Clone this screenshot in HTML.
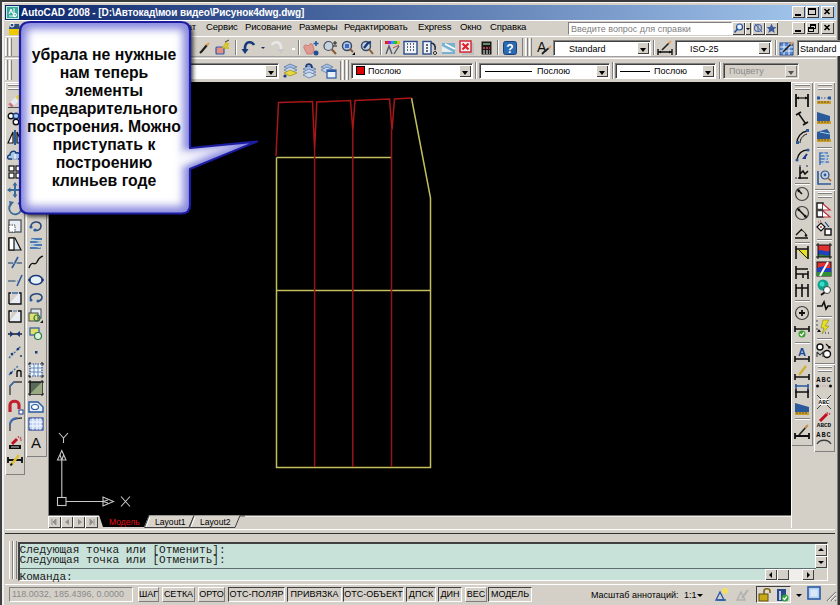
<!DOCTYPE html>
<html><head><meta charset="utf-8">
<style>
*{margin:0;padding:0;box-sizing:border-box}
html,body{width:840px;height:605px;overflow:hidden;background:#d4d0c8;font-family:"Liberation Sans",sans-serif;position:relative}
.a{position:absolute}
svg.a{overflow:visible}
.t{position:absolute;white-space:nowrap;font-size:9px;line-height:10px;color:#000}
.combo{position:absolute;background:#fff;border-top:1px solid #808080;border-left:1px solid #808080;border-bottom:1px solid #fff;border-right:1px solid #fff;box-shadow:inset 1px 1px 0 #404040}
.dd{position:absolute;top:1px;right:1px;width:12px;bottom:1px;background:#d4d0c8;border-top:1px solid #fff;border-left:1px solid #fff;box-shadow:inset -1px -1px 0 #404040}
.dd:after{content:"";position:absolute;left:2px;top:5px;border-left:3.5px solid transparent;border-right:3.5px solid transparent;border-top:4px solid #000}
.btn{position:absolute;background:#d4d0c8;border-top:1px solid #fff;border-left:1px solid #fff;box-shadow:inset -1px -1px 0 #404040}
.grip{position:absolute;width:8px;background:linear-gradient(90deg,#fff 0 1px,#e4e2dc 1px 2px,#808080 2px 3px,transparent 3px 4px,#fff 4px 5px,#e4e2dc 5px 6px,#808080 6px 7px,transparent 7px)}
.sep{position:absolute;width:2px;border-left:1px solid #808080;border-right:1px solid #fff}
.hsep{position:absolute;height:2px;border-top:1px solid #808080;border-bottom:1px solid #fff}
.tb{position:absolute;border-top:1px solid #fff;border-left:1px solid #fff;box-shadow:inset -1px -1px 0 #808080}
.sb{position:absolute;height:15px;border:1px solid;border-color:#404040 #fff #fff #404040;font-size:9px;line-height:13px;text-align:center;color:#000}
.sbr{position:absolute;height:15px;border:1px solid;border-color:#fff #808080 #808080 #fff;font-size:9px;line-height:13px;text-align:center;color:#000}
</style></head><body>
<!-- outer frame -->
<div class="a" style="left:0;top:0;width:840px;height:2px;background:#3a3a3a"></div>
<div class="a" style="left:0;top:0;width:2px;height:605px;background:#404040"></div>
<div class="a" style="left:2px;top:2px;width:836px;height:1px;background:#f4f4f4"></div>
<div class="a" style="left:2px;top:2px;width:2px;height:603px;background:#f0f0f0"></div>
<div class="a" style="left:837px;top:2px;width:1px;height:603px;background:#808080"></div>
<div class="a" style="left:838px;top:0;width:2px;height:605px;background:#303030"></div>

<!-- title bar -->
<div class="a" style="left:5px;top:5px;width:831px;height:15px;background:linear-gradient(90deg,#0a246a 0%,#a6caf0 100%)"></div>
<div class="a" style="left:6px;top:6px;width:13px;height:13px;background:#3aa89a;border:1px solid #c0f0e8"></div>
<svg class="a" style="left:6px;top:6px" width="13" height="13"><path d="M3 8 L5 3 L7 8 M4 6h2 M8 2v9 M3 10h7" stroke="#fff" stroke-width="1" fill="none"/><circle cx="9" cy="9" r="1.6" stroke="#fff" fill="none"/></svg>
<div class="t" style="left:21px;top:7px;color:#fff;font-weight:bold;font-size:10px;line-height:11px;letter-spacing:-0.07px">AutoCAD 2008 - [D:\Автокад\мои видео\Рисунок4dwg.dwg]</div>
<div class="btn" style="left:792px;top:6px;width:13px;height:12px"></div>
<div class="a" style="left:795px;top:14px;width:6px;height:2px;background:#000"></div>
<div class="btn" style="left:806px;top:6px;width:13px;height:12px"></div>
<div class="a" style="left:808px;top:8px;width:8px;height:7px;border:1px solid #000;border-top-width:2px"></div>
<div class="btn" style="left:821px;top:6px;width:13px;height:12px"></div>
<svg class="a" style="left:821px;top:6px" width="13" height="12"><path d="M3.5 3 L8.5 8 M8.5 3 L3.5 8" stroke="#000" stroke-width="1.6"/></svg>

<!-- menu bar -->
<div class="a" style="left:5px;top:20px;width:831px;height:1px;background:#fff"></div>
<svg class="a" style="left:8px;top:21px" width="14" height="15"><path d="M1 8 L12 8 L12 14 L1 14Z" fill="#f0c800"/><path d="M2 3 L11 3 L12 8 L1 8Z" fill="#2a4c7a"/><circle cx="4" cy="4" r="2" fill="none" stroke="#fff"/></svg>
<div class="t" style="left:163px;top:22px;font-size:9.6px;letter-spacing:-0.2px">Формат</div>
<div class="t" style="left:206px;top:22px;font-size:9.6px;letter-spacing:-0.2px">Сервис</div>
<div class="t" style="left:245px;top:22px;font-size:9.6px;letter-spacing:-0.2px">Рисование</div>
<div class="t" style="left:299px;top:22px;font-size:9.6px;letter-spacing:-0.2px">Размеры</div>
<div class="t" style="left:344px;top:22px;font-size:9.6px;letter-spacing:-0.2px">Редактировать</div>
<div class="t" style="left:418px;top:22px;font-size:9.6px;letter-spacing:-0.2px">Express</div>
<div class="t" style="left:460px;top:22px;font-size:9.6px;letter-spacing:-0.2px">Окно</div>
<div class="t" style="left:490px;top:22px;font-size:9.6px;letter-spacing:-0.2px">Справка</div>
<!-- help box -->
<div class="combo" style="left:568px;top:22px;width:164px;height:13px;box-shadow:none"></div>
<div class="t" style="left:571px;top:24px;color:#808080">Введите вопрос для справки</div>
<div class="btn" style="left:732px;top:22px;width:13px;height:13px"></div>
<svg class="a" style="left:732px;top:22px" width="13" height="13"><circle cx="7.5" cy="5" r="3" fill="#e8f0ff" stroke="#2050a0" stroke-width="1.2"/><path d="M5.5 7 L2.5 10.5" stroke="#2050a0" stroke-width="1.6"/></svg>
<div class="btn" style="left:745px;top:22px;width:6px;height:13px"></div>
<div class="a" style="left:746px;top:28px;border-left:2px solid transparent;border-right:2px solid transparent;border-top:2px solid #000"></div>
<div class="btn" style="left:752px;top:22px;width:13px;height:13px"></div>
<svg class="a" style="left:752px;top:22px" width="13" height="13"><circle cx="6" cy="6" r="3.5" fill="none" stroke="#4a6aa8" stroke-width="1.2"/><path d="M3 2 L10 10 M6 2v8" stroke="#4a6aa8" stroke-width="1"/></svg>
<div class="btn" style="left:765px;top:22px;width:13px;height:13px"></div>
<svg class="a" style="left:765px;top:22px" width="13" height="13"><path d="M6.5 1.5 L8 5 L11.5 5.2 L8.8 7.5 L9.8 11 L6.5 9 L3.2 11 L4.2 7.5 L1.5 5.2 L5 5Z" fill="#3c5a9a"/></svg>
<div class="btn" style="left:792px;top:22px;width:13px;height:12px"></div>
<div class="a" style="left:795px;top:30px;width:6px;height:2px;background:#000"></div>
<div class="btn" style="left:806px;top:22px;width:13px;height:12px"></div>
<div class="a" style="left:810px;top:24px;width:6px;height:5px;border:1px solid #000;border-top-width:2px"></div>
<div class="a" style="left:808px;top:27px;width:6px;height:5px;border:1px solid #000;border-top-width:2px;background:#d4d0c8"></div>
<div class="btn" style="left:821px;top:22px;width:13px;height:12px"></div>
<svg class="a" style="left:821px;top:22px" width="13" height="12"><path d="M3.5 3 L8.5 8 M8.5 3 L3.5 8" stroke="#000" stroke-width="1.6"/></svg>
<div class="a" style="left:5px;top:36px;width:831px;height:1px;background:#fff"></div>


<!-- ROW1 -->
<div class="a" style="left:5px;top:56px;width:831px;height:1px;background:#a0a0a0"></div>
<div class="a" style="left:5px;top:58px;width:831px;height:1px;background:#fff"></div>
<div class="grip" style="left:5px;top:38px;height:18px"></div>
<svg class="a" style="left:198px;top:42px" width="13" height="13"><path d="M2 11 L4 9 L9 3" stroke="#202020" stroke-width="2.2" fill="none"/><path d="M8.5 3.5 L11 1" stroke="#e09a50" stroke-width="2.2"/></svg>
<svg class="a" style="left:215px;top:40px" width="16" height="16"><rect x="1" y="7" width="8" height="7" rx="1" fill="#e89080" stroke="#2a5ab0" stroke-width="1.2"/><path d="M8 8 L11 3 L13 4 L11 8 L14 8" stroke="#d8c020" stroke-width="2" fill="none"/><path d="M10 2 L14 0" stroke="#303030" stroke-width="1"/></svg>
<div class="sep" style="left:235px;top:40px;height:15px"></div>
<svg class="a" style="left:240px;top:40px" width="17" height="16"><path d="M14 5 C12 1 6 1 5 7 L5 10" stroke="#163a78" stroke-width="2.6" fill="none"/><path d="M1.5 9 L5 14 L8.5 9Z" fill="#163a78"/></svg>
<div class="a" style="left:261px;top:47px;border-left:2px solid transparent;border-right:2px solid transparent;border-top:2px solid #1a2a60"></div>
<svg class="a" style="left:269px;top:40px" width="17" height="16"><path d="M3 5 C5 1 11 1 12 7 L12 10" stroke="#e8e8e8" stroke-width="2.6" fill="none"/><path d="M8.5 9 L12 14 L15.5 9Z" fill="#c8c8c8"/></svg>
<div class="a" style="left:292px;top:48px;width:3px;height:2px;background:#fff"></div>
<div class="sep" style="left:298px;top:40px;height:15px"></div>
<svg class="a" style="left:302px;top:40px" width="17" height="16"><path d="M2 8 C1 5 4 4 6 6 L8 4 C9 3 11 4 11 6 L12 10 L10 14 L5 14Z" fill="#e09a90" stroke="#c07070" stroke-width="0.8"/><path d="M14 1v5 M11.5 3.5h5" stroke="#1f5aa8" stroke-width="1.6"/><circle cx="14" cy="13" r="2.5" fill="#1f4f90"/></svg>
<svg class="a" style="left:322px;top:40px" width="17" height="16"><circle cx="6.5" cy="6" r="4.5" fill="#c8d2dc" stroke="#404c60" stroke-width="1.2"/><path d="M9.5 9 L14 14" stroke="#8a5a30" stroke-width="2"/><path d="M13 1v4 M11 3h4 M11 6h4" stroke="#202020" stroke-width="1"/></svg>
<svg class="a" style="left:340px;top:40px" width="17" height="16"><circle cx="7" cy="6" r="4.5" fill="#b8c8e0" stroke="#34486a" stroke-width="1.4"/><rect x="5" y="4" width="4" height="4" fill="#3a6ac8"/><path d="M10 9 L13 12" stroke="#8a5a30" stroke-width="2"/><path d="M12 15 L15 12 L15 15Z" fill="#000"/></svg>
<svg class="a" style="left:359px;top:40px" width="17" height="16"><circle cx="7" cy="6" r="4.5" fill="#c8d0e0" stroke="#34486a" stroke-width="1.4"/><path d="M5 8 L9 3 L12 2" stroke="#1a3a7a" stroke-width="2.4" fill="none"/><path d="M10 9 L14 14" stroke="#8a5a30" stroke-width="2"/></svg>
<div class="sep" style="left:380px;top:40px;height:15px"></div>
<svg class="a" style="left:384px;top:40px" width="17" height="16"><rect x="1" y="1" width="3" height="3" fill="#e02020"/><rect x="4" y="1" width="3" height="3" fill="#a020e0"/><rect x="7" y="1" width="3" height="3" fill="#20a0e0"/><rect x="10" y="1" width="3" height="3" fill="#20c040"/><rect x="13" y="1" width="3" height="3" fill="#e0c020"/><path d="M2 14 L5 6 L8 14 M10 14 L15 6" stroke="#505a70" stroke-width="1.4" fill="none"/><path d="M9 8 L15 5" stroke="#c04040" stroke-width="1"/></svg>
<svg class="a" style="left:403px;top:40px" width="15" height="16"><rect x="1" y="1.5" width="13" height="12.5" fill="#f0f4f8" stroke="#2a4a88" stroke-width="1.4"/><path d="M4 4h1 M4 7h1 M4 10h1 M7 4h1 M7 7h1 M7 10h1 M10 4h1 M10 7h1 M10 10h1" stroke="#303848" stroke-width="1.5"/></svg>
<svg class="a" style="left:422px;top:40px" width="16" height="16"><rect x="1" y="1.5" width="8" height="12.5" fill="#f0f4f8" stroke="#2a4a88" stroke-width="1.4"/><path d="M4 5h2 M4 8h2 M4 11h2" stroke="#303848" stroke-width="1.4"/><path d="M9 3 C12 3 14 6 13 10" stroke="#1a2a50" stroke-width="1.6" fill="none"/><circle cx="13" cy="13" r="1.5" fill="#fff" stroke="#202020"/></svg>
<svg class="a" style="left:441px;top:41px" width="16" height="15"><path d="M1 2 L14 2 L14 13 L1 13Z" fill="#7ab0d0"/><path d="M1 5 L12 11 L1 11Z" fill="#e8eef0"/><path d="M4 3 L14 8" stroke="#fff" stroke-width="1.6"/></svg>
<svg class="a" style="left:459px;top:40px" width="16" height="16"><rect x="3" y="3" width="12" height="12" fill="#c0c0c0"/><rect x="1" y="1" width="11" height="11" fill="#f4f0f0" stroke="#d02030" stroke-width="1.4"/><path d="M3.5 3.5 L9.5 9.5 M9.5 3.5 L3.5 9.5" stroke="#e02030" stroke-width="2.2"/></svg>
<svg class="a" style="left:481px;top:41px" width="11" height="14"><rect x="0.5" y="0.5" width="10" height="13" fill="#181818"/><rect x="2" y="2" width="7" height="2" fill="#6a8a70"/><path d="M2 7h2 M5 7h2 M8 7h1" stroke="#e05050" stroke-width="1.4"/><path d="M2 10h2 M5 10h2 M8 10h1 M2 12h2 M5 12h2 M8 12h1" stroke="#f0f0f0" stroke-width="1.2"/></svg>
<div class="sep" style="left:497px;top:40px;height:15px"></div>
<svg class="a" style="left:503px;top:41px" width="14" height="14"><rect x="0.5" y="0.5" width="13" height="13" rx="2" fill="#2a6ab0" stroke="#1a4080"/><text x="7" y="11.5" font-family="Liberation Sans" font-weight="bold" font-size="12" fill="#fff" text-anchor="middle">?</text></svg>
<div class="a" style="left:522px;top:38px;width:1px;height:18px;background:#808080"></div>
<div class="grip" style="left:525px;top:38px;height:18px"></div>
<svg class="a" style="left:536px;top:40px" width="16" height="16"><text x="1" y="12" font-family="Liberation Sans" font-size="14" fill="#101010">A</text><path d="M6 14 L9 11 L13 8" stroke="#202020" stroke-width="1.8"/><path d="M12.5 8.5 L15 6" stroke="#e0a060" stroke-width="1.8"/></svg>
<div class="combo" style="left:553px;top:40px;width:98px;height:16px"><div class="dd"></div></div>
<div class="t" style="left:569px;top:44px">Standard</div>
<div class="sep" style="left:653px;top:40px;height:15px"></div>
<svg class="a" style="left:657px;top:40px" width="16" height="16"><path d="M1 12h14 M1 9v6 M15 9v6" stroke="#101010" stroke-width="1.4"/><path d="M2 12 L4 10.5 L4 13.5Z M14 12 L12 10.5 L12 13.5Z" fill="#101010"/><path d="M5 10 L12 3" stroke="#202020" stroke-width="1.6"/><path d="M11.5 3.5 L14 1" stroke="#e0a060" stroke-width="1.8"/></svg>
<div class="combo" style="left:675px;top:40px;width:97px;height:16px"><div class="dd"></div></div>
<div class="t" style="left:690px;top:44px">ISO-25</div>
<div class="sep" style="left:775px;top:40px;height:15px"></div>
<svg class="a" style="left:779px;top:40px" width="16" height="16"><rect x="1" y="3" width="13" height="12" fill="#5a8ad0" stroke="#2a4a90"/><path d="M1 7h13 M1 11h13 M5 3v12 M10 3v12" stroke="#fff" stroke-width="0.9"/><path d="M4 12 L12 4" stroke="#202020" stroke-width="1.6"/><path d="M11.5 4.5 L14 2" stroke="#e0a060" stroke-width="1.8"/></svg>
<div class="combo" style="left:797px;top:40px;width:50px;height:16px"></div>
<div class="t" style="left:800px;top:44px">Standard</div>

<!-- ROW2 -->
<div class="a" style="left:5px;top:81px;width:831px;height:1px;background:#d4d0c8"></div>
<div class="grip" style="left:5px;top:60px;height:20px"></div>
<div class="combo" style="left:24px;top:63px;width:255px;height:16px"><div class="dd"></div></div>
<svg class="a" style="left:282px;top:62px" width="17" height="17"><path d="M2 5 L8 2 L15 5 L8 8Z" fill="#a8c0e0" stroke="#5a7aa8" stroke-width="0.8"/><path d="M2 8 L8 5 L15 8 L8 11Z" fill="#c8d8f0" stroke="#5a7aa8" stroke-width="0.8"/><path d="M2 11 L8 8 L15 11 L8 14Z" fill="#e8d840" stroke="#a09020" stroke-width="0.8"/><circle cx="3" cy="14" r="1.6" fill="#1a3a7a"/></svg>
<svg class="a" style="left:301px;top:62px" width="17" height="17"><path d="M2 7 L8 4 L15 7 L8 10Z" fill="#a8c0e0" stroke="#5a7aa8" stroke-width="0.8"/><path d="M2 10 L8 7 L15 10 L8 13Z" fill="#c8d8f0" stroke="#5a7aa8" stroke-width="0.8"/><path d="M2 13 L8 10 L15 13 L8 16Z" fill="#d0dcea" stroke="#5a7aa8" stroke-width="0.8"/><path d="M11 6 C11 1 5 1 5 5" stroke="#1a3a7a" stroke-width="1.8" fill="none"/></svg>
<svg class="a" style="left:320px;top:62px" width="17" height="17"><path d="M1 5 L7 2 L13 5 L7 8Z" fill="#a8c0e0" stroke="#5a7aa8" stroke-width="0.8"/><path d="M1 8 L7 5 L13 8 L7 11Z" fill="#c8d8f0" stroke="#5a7aa8" stroke-width="0.8"/><rect x="7" y="8" width="9" height="8" fill="#e8f0f8" stroke="#2a5aa8" stroke-width="1.2"/><rect x="7" y="8" width="9" height="2" fill="#2a5aa8"/></svg>
<div class="a" style="left:340px;top:61px;width:1px;height:19px;background:#808080"></div>
<div class="grip" style="left:342px;top:60px;height:20px"></div>
<div class="combo" style="left:351px;top:63px;width:122px;height:16px"><div class="dd"></div></div>
<div class="a" style="left:356px;top:66px;width:9px;height:9px;background:#e00000;border:1px solid #000"></div>
<div class="t" style="left:368px;top:66px">Послою</div>
<div class="sep" style="left:475px;top:62px;height:17px"></div>
<div class="combo" style="left:479px;top:63px;width:131px;height:16px"><div class="dd"></div></div>
<div class="a" style="left:485px;top:71px;width:47px;height:1px;background:#000"></div>
<div class="t" style="left:537px;top:66px">Послою</div>
<div class="sep" style="left:612px;top:62px;height:17px"></div>
<div class="combo" style="left:615px;top:63px;width:101px;height:16px"><div class="dd"></div></div>
<div class="a" style="left:620px;top:71px;width:30px;height:1px;background:#000"></div>
<div class="t" style="left:654px;top:66px">Послою</div>
<div class="sep" style="left:719px;top:62px;height:17px"></div>
<div class="combo" style="left:723px;top:63px;width:76px;height:16px;background:#d4d0c8"><div class="dd" style="opacity:0.6"></div></div>
<div class="t" style="left:729px;top:66px;color:#8a8a8a">Поцвету</div>


<div id="draw" class="a" style="left:49px;top:82px;width:742px;height:433px;background:#000"></div>


<!-- DRAW -->
<svg class="a" style="left:0;top:0" width="840" height="605">
<g fill="none" stroke-width="1.5" stroke-linejoin="miter">
<path d="M276.5 157.5 L276.5 467.5 L430.5 467.5 L430.5 198 L411.5 98" stroke="#c2bf5c"/>
<path d="M276.5 157.5 L391.5 157.5 M276.5 290.5 L430.5 290.5" stroke="#c2bf5c"/>
<path d="M276 156 L278.5 102.5 L312.5 101.5 L314.6 150 L316.8 102 L350.5 100.5 L352.8 130 L355 100.5 L389.5 99 L392 130 L394.5 99 L411.5 98" stroke="#a81616"/>
<path d="M314.6 150 L314.6 467 M352.8 130 L352.8 467 M391.5 130 L391.5 467" stroke="#981414"/>
</g>
<g fill="none" stroke="#c8c8c8" stroke-width="1.1">
<rect x="57.5" y="497.5" width="8.5" height="8"/>
<path d="M61.8 497.5 L61.8 460 M57.5 460 L66 460 L61.8 450.5 Z M61.8 460 L60 455 M61.8 460 L63.6 455"/>
<path d="M66 501.5 L103 501.5 M103 497 L103 506 L113.5 501.5 Z M103 501.5 L108 500 M103 501.5 L108 503"/>
<path d="M59 433 L63.5 438 L68 433 M63.5 438 L63.5 443"/>
<path d="M121 496.5 L130 506.5 M130 496.5 L121 506.5"/>
</g>
</svg>

<!-- LEFT -->
<div class="tb" style="left:5px;top:82px;width:20px;height:393px;background:#d4d0c8"></div>
<div class="a" style="left:8px;top:84px;width:14px;height:2px;border-top:1px solid #fff;border-bottom:1px solid #808080"></div>
<div class="a" style="left:8px;top:88px;width:14px;height:2px;border-top:1px solid #fff;border-bottom:1px solid #808080"></div>
<svg class="a" style="left:6px;top:92px" width="18" height="18"><path d="M4 14 L13 5" stroke="#e8e8f0" stroke-width="5"/><path d="M4 14 L6 12" stroke="#d07080" stroke-width="5"/><path d="M11 7 L14 4" stroke="#e0d040" stroke-width="5"/><path d="M2 15.5h12" stroke="#505050" stroke-width="1"/></svg>
<svg class="a" style="left:6px;top:110px" width="18" height="18"><circle cx="5" cy="6" r="2.8" fill="#fff" stroke="#101010" stroke-width="1.4"/><circle cx="10" cy="6" r="2.8" fill="#a8c8e8" stroke="#1a3a8a" stroke-width="1.4"/><circle cx="10" cy="12" r="2.8" fill="#fff" stroke="#101010" stroke-width="1.4"/></svg>
<svg class="a" style="left:6px;top:128px" width="18" height="18"><path d="M2 15 L7 4 L7 15Z" fill="#fff" stroke="#101010" stroke-width="1.2"/><path d="M9 2v15" stroke="#2a5a9a" stroke-width="2"/><path d="M16 15 L11 4 L11 15Z" fill="#a8c8e8" stroke="#101010" stroke-width="1.2"/></svg>
<svg class="a" style="left:6px;top:146px" width="18" height="18"><path d="M3 13 C1 13 1 9 4 9 C4 5 9 4 10 7 C13 6 16 9 14 13Z" fill="#a8c8e8" stroke="#1a3a7a" stroke-width="1.4"/><path d="M9 8v5 M6 13h6" stroke="#fff" stroke-width="1"/></svg>
<svg class="a" style="left:6px;top:163px" width="18" height="18"><rect x="3" y="3" width="5" height="5" fill="#fff" stroke="#101010" stroke-width="1.2"/><rect x="10" y="3" width="5" height="5" fill="#fff" stroke="#101010" stroke-width="1.2"/><rect x="3" y="10" width="5" height="5" fill="#fff" stroke="#101010" stroke-width="1.2"/><rect x="10" y="10" width="5" height="5" fill="#fff" stroke="#101010" stroke-width="1.2"/></svg>
<svg class="a" style="left:6px;top:181px" width="18" height="18"><path d="M9 2v14 M2 9h14" stroke="#3a6a9a" stroke-width="2"/><path d="M9 1 L6.5 4.5 L11.5 4.5Z M9 17 L6.5 13.5 L11.5 13.5Z M1 9 L4.5 6.5 L4.5 11.5Z M17 9 L13.5 6.5 L13.5 11.5Z" fill="#3a6a9a"/></svg>
<svg class="a" style="left:6px;top:199px" width="18" height="18"><path d="M5 5 A6 6 0 1 0 12 4" fill="none" stroke="#3a6a9a" stroke-width="1.8"/><path d="M3 2 L8 3 L4 8Z" fill="#3a6a9a"/></svg>
<svg class="a" style="left:6px;top:217px" width="18" height="18"><rect x="3" y="3" width="12" height="12" fill="#e8eef4" stroke="#404850" stroke-width="1.2"/><rect x="3" y="8" width="6" height="7" fill="#fff" stroke="#404850" stroke-width="1" stroke-dasharray="1.5 1"/></svg>
<svg class="a" style="left:6px;top:235px" width="18" height="18"><path d="M3 3 L9 3 L15 15 L3 15Z" fill="#e0e8f0" stroke="#101010" stroke-width="1.2"/><rect x="3" y="3" width="5" height="12" fill="#fff" stroke="#101010" stroke-width="1.2"/></svg>
<svg class="a" style="left:6px;top:253px" width="18" height="18"><path d="M2 10h5 M11 10h5" stroke="#4a6a8a" stroke-width="1.4"/><path d="M6 15 L12 4" stroke="#2a5aa0" stroke-width="1.6"/><path d="M8 10h3" stroke="#808080" stroke-width="1" stroke-dasharray="1 1"/></svg>
<svg class="a" style="left:6px;top:271px" width="18" height="18"><path d="M2 10h7" stroke="#4a6a8a" stroke-width="1.4"/><path d="M9 10h3" stroke="#808080" stroke-width="1" stroke-dasharray="1 1"/><path d="M11 15 L16 4" stroke="#2a5aa0" stroke-width="1.6"/></svg>
<svg class="a" style="left:6px;top:289px" width="18" height="18"><path d="M3 15 L3 4 L5 4 M13 4 L15 4 L15 15 L3 15" fill="#e8eef4" stroke="#101010" stroke-width="1.4"/><path d="M6 4h6" stroke="#3a6ab0" stroke-width="1.6"/></svg>
<svg class="a" style="left:6px;top:307px" width="18" height="18"><path d="M3 15 L3 4 L6 4 M12 4 L15 4 L15 15 L3 15" fill="#e8eef4" stroke="#101010" stroke-width="1.4"/><path d="M7 4h4" stroke="#3a6ab0" stroke-width="1"/></svg>
<svg class="a" style="left:6px;top:325px" width="18" height="18"><path d="M2 9h14" stroke="#101010" stroke-width="1.4"/><path d="M8 9 L4 6 L4 12Z M10 9 L14 6 L14 12Z" fill="#1a3a7a"/></svg>
<svg class="a" style="left:6px;top:343px" width="18" height="18"><path d="M3 15 L15 3" stroke="#3a6aa0" stroke-width="1.4" stroke-dasharray="2 1.5"/><circle cx="6" cy="11" r="1.3" fill="#1a3a7a"/><circle cx="12" cy="6" r="1.3" fill="#1a3a7a"/><circle cx="15" cy="13" r="1" fill="#1a3a7a"/></svg>
<svg class="a" style="left:6px;top:361px" width="18" height="18"><path d="M3 14 L12 5" stroke="#3a6aa0" stroke-width="1.4" stroke-dasharray="2 1.5"/><circle cx="5" cy="12" r="1.3" fill="#1a3a7a"/><path d="M11 16 L11 11 C11 9 15 9 15 11 L15 16" fill="none" stroke="#101010" stroke-width="1.4"/></svg>
<svg class="a" style="left:6px;top:379px" width="18" height="18"><path d="M4 16 L4 7 L8 3 L16 3" fill="none" stroke="#404040" stroke-width="1.4"/><path d="M4 7 L8 3" stroke="#3a6ab0" stroke-width="1.6"/></svg>
<svg class="a" style="left:6px;top:397px" width="18" height="18"><path d="M4 15 L4 8 C4 3 13 3 13 8 L13 12" fill="none" stroke="#c02030" stroke-width="3.2"/><rect x="13" y="13" width="4" height="4" fill="#fff" stroke="#1a3a8a" stroke-width="1"/></svg>
<svg class="a" style="left:6px;top:415px" width="18" height="18"><path d="M4 16 L4 10 C4 5 8 3 16 3" fill="none" stroke="#404040" stroke-width="1.4"/><path d="M4 10 C4 6 7 3.5 11 3" fill="none" stroke="#3a6ab0" stroke-width="1.8"/></svg>
<svg class="a" style="left:6px;top:433px" width="18" height="18"><path d="M3 12h12v4h-12z" fill="#101010"/><path d="M5 14h8" stroke="#fff" stroke-width="0.8"/><path d="M6 11 L11 6" stroke="#c01020" stroke-width="3"/><path d="M12 3l1 2 M15 4l-1 2 M14 7l2 0" stroke="#c03040" stroke-width="1"/></svg>
<svg class="a" style="left:6px;top:451px" width="18" height="18"><path d="M2 9h14 M2 6v6 M16 6v6" stroke="#101010" stroke-width="1.8"/><path d="M5 14 L13 4" stroke="#e0c030" stroke-width="2.4"/><path d="M4.5 14.5 L6 12.5" stroke="#101010" stroke-width="2"/></svg>
<div class="tb" style="left:26px;top:82px;width:21px;height:375px;background:#d4d0c8"></div>
<svg class="a" style="left:27px;top:217px" width="18" height="18"><path d="M4 10 C3 4 14 3 14 9 C14 13 10 14 8 13" fill="none" stroke="#2a4a7a" stroke-width="1.6"/><circle cx="4" cy="10" r="1.6" fill="#2a5aa0"/><circle cx="8" cy="13" r="1.6" fill="#2a5aa0"/></svg>
<svg class="a" style="left:27px;top:235px" width="18" height="18"><path d="M4 4h11 M3 7h11 M4 10h11 M3 13h11" stroke="#4a7ab0" stroke-width="2.2"/><path d="M4 4 L14 7 L4 10 L14 13" stroke="#c8dcf0" stroke-width="0.8" fill="none"/></svg>
<svg class="a" style="left:27px;top:253px" width="18" height="18"><path d="M2 15 C5 6 8 14 10 9 C12 4 14 4 16 3" fill="none" stroke="#101010" stroke-width="1.3"/></svg>
<svg class="a" style="left:27px;top:271px" width="18" height="18"><ellipse cx="9" cy="9" rx="6.5" ry="4.5" fill="#e8f0f8" stroke="#1a3a7a" stroke-width="1.6"/><circle cx="2.5" cy="9" r="1.4" fill="#1a3a7a"/><circle cx="15.5" cy="9" r="1.4" fill="#1a3a7a"/></svg>
<svg class="a" style="left:27px;top:289px" width="18" height="18"><path d="M4 11 C1 6 9 3 14 6 C16 8 15 11 12 12" fill="none" stroke="#2a4a7a" stroke-width="1.6"/><circle cx="4" cy="11" r="1.5" fill="#2a5aa0"/><circle cx="11" cy="12" r="1.5" fill="#2a5aa0"/></svg>
<svg class="a" style="left:27px;top:307px" width="18" height="18"><rect x="4" y="2" width="10" height="9" fill="#e0e8f0" stroke="#404850" stroke-width="1"/><rect x="2" y="6" width="9" height="8" fill="#e0e070" stroke="#404850" stroke-width="1"/><circle cx="10" cy="11" r="3" fill="none" stroke="#2a7a40" stroke-width="1.2"/><path d="M13 16 L16 13 L16 16Z" fill="#101010"/></svg>
<svg class="a" style="left:27px;top:325px" width="18" height="18"><rect x="3" y="3" width="9" height="7" fill="#e0e070" stroke="#2a5a9a" stroke-width="1.2"/><circle cx="11" cy="11" r="3.5" fill="#e0f0e0" stroke="#2a7a40" stroke-width="1.2"/></svg>
<svg class="a" style="left:27px;top:343px" width="18" height="18"><rect x="8" y="8" width="2.5" height="2.5" fill="#1a3a7a"/></svg>
<svg class="a" style="left:27px;top:361px" width="18" height="18"><rect x="3" y="3" width="12" height="12" fill="#eef4fa" stroke="#2a4a8a" stroke-width="1.2" stroke-dasharray="1.5 1"/><path d="M3 7h12 M3 11h12 M7 3v12 M11 3v12" stroke="#4a7ab0" stroke-width="0.8"/><path d="M1 3h2 M15 3h2 M1 15h2 M15 15h2 M3 1v2 M15 1v2 M3 15v2 M15 15v2" stroke="#101010"/></svg>
<svg class="a" style="left:27px;top:379px" width="18" height="18"><rect x="3" y="3" width="12" height="12" fill="#5a6a5a" stroke="#101010" stroke-width="1.4"/><path d="M3 15 L15 3 L15 15Z" fill="#9aaa80"/><path d="M1 3h2 M15 3h2 M1 15h2 M15 15h2 M3 1v2 M15 1v2 M3 15v2 M15 15v2" stroke="#101010"/></svg>
<svg class="a" style="left:27px;top:397px" width="18" height="18"><path d="M2 5 L11 5 L16 10 L16 15 L2 15Z" fill="#e0ecf8" stroke="#2a5a9a" stroke-width="1.4"/><ellipse cx="8" cy="10" rx="3.5" ry="2.5" fill="#fff" stroke="#2a5a9a" stroke-width="1.2"/></svg>
<svg class="a" style="left:27px;top:415px" width="18" height="18"><rect x="2" y="3" width="14" height="12" fill="#c0d4f0" stroke="#2a4a9a" stroke-width="1.2"/><path d="M2 7h14 M2 11h14 M6 3v12 M10 3v12 M13 3v12" stroke="#fff" stroke-width="0.9"/></svg>
<svg class="a" style="left:27px;top:433px" width="18" height="18"><text x="9" y="15" text-anchor="middle" font-family="Liberation Sans" font-size="15" fill="#101010">A</text></svg>
<!-- /LEFT -->
<!-- RIGHT -->
<div class="tb" style="left:791px;top:82px;width:22px;height:364px;background:#d4d0c8"></div>
<div class="a" style="left:795px;top:84px;width:15px;height:2px;border-top:1px solid #fff;border-bottom:1px solid #808080"></div>
<div class="a" style="left:795px;top:88px;width:15px;height:2px;border-top:1px solid #fff;border-bottom:1px solid #808080"></div>
<svg class="a" style="left:793px;top:91px" width="18" height="18"><path d="M3 3v13 M15 3v13" stroke="#101010" stroke-width="1.8"/><path d="M3 7h12" stroke="#101010" stroke-width="1.2"/><path d="M3 7 L6 5.5 L6 8.5Z M15 7 L12 5.5 L12 8.5Z" fill="#101010"/></svg>
<svg class="a" style="left:793px;top:109px" width="18" height="18"><path d="M3 6 L8 3 M10 16 L15 13" stroke="#101010" stroke-width="1.8"/><path d="M5.5 4.5 L12.5 14.5" stroke="#101010" stroke-width="1.4"/></svg>
<svg class="a" style="left:793px;top:127px" width="18" height="18"><path d="M4 16 C4 10 8 5 14 4" fill="none" stroke="#101010" stroke-width="1.4"/><path d="M7 16 C7 12 10 8 14 7" fill="none" stroke="#101010" stroke-width="1"/><rect x="13" y="2" width="3" height="3" fill="#2a5a9a"/><rect x="3" y="14" width="3" height="3" fill="#2a5a9a"/></svg>
<svg class="a" style="left:793px;top:146px" width="18" height="18"><path d="M4 14 C5 8 9 4 15 4" fill="none" stroke="#101010" stroke-width="1.4"/><path d="M14 8 L11 12 L13 12" fill="none" stroke="#1a3a8a" stroke-width="2"/><circle cx="15" cy="4" r="1.6" fill="#2a5a9a"/><circle cx="4" cy="14" r="1.6" fill="#2a5a9a"/></svg>
<svg class="a" style="left:793px;top:163px" width="18" height="18"><path d="M7 4v12 M7 11 L10 8 L12 11 L15 8 M5 15h10" stroke="#101010" stroke-width="1.6" fill="none"/><circle cx="7" cy="3" r="1" fill="#606080"/><circle cx="14" cy="3" r="1" fill="#606080"/><circle cx="3" cy="15" r="1" fill="#606080"/></svg>
<div class="hsep" style="left:795px;top:183px;width:15px"></div>
<svg class="a" style="left:793px;top:185px" width="18" height="18"><circle cx="9" cy="9" r="6.5" fill="none" stroke="#404040" stroke-width="1.2"/><path d="M9 9 L5 5" stroke="#101010" stroke-width="1.6"/><path d="M4 4 L7.5 5 L5 7.5Z" fill="#101010"/></svg>
<svg class="a" style="left:793px;top:204px" width="18" height="18"><circle cx="9" cy="9" r="6.5" fill="none" stroke="#404040" stroke-width="1.2"/><path d="M5 5 L13 13" stroke="#101010" stroke-width="1.6"/><path d="M4 4 L7.5 5 L5 7.5Z M14 14 L10.5 13 L13 10.5Z" fill="#101010"/></svg>
<svg class="a" style="left:793px;top:222px" width="18" height="18"><path d="M2 16h13 M3 13 L9 7" stroke="#101010" stroke-width="1.4"/><path d="M8 8 C11 9 13 11 13 14" fill="none" stroke="#101010" stroke-width="1"/><circle cx="13" cy="13.5" r="1.3" fill="#101010"/></svg>
<div class="hsep" style="left:795px;top:242px;width:15px"></div>
<svg class="a" style="left:793px;top:243px" width="18" height="18"><path d="M3 3v13 M15 3v13 M3 6h12" stroke="#101010" stroke-width="1.6"/><path d="M4 7 L14 7 L14 16Z" fill="#e8e020"/><path d="M6 7 L14 15" stroke="#202020" stroke-width="1"/></svg>
<svg class="a" style="left:793px;top:263px" width="18" height="18"><path d="M3 3v13 M15 8v8 M3 6h12 M3 11h12 M10 11v4" stroke="#101010" stroke-width="1.6"/></svg>
<svg class="a" style="left:793px;top:281px" width="18" height="18"><path d="M3 3v13 M9 3v13 M15 3v13 M3 7h12" stroke="#101010" stroke-width="1.6"/></svg>
<div class="hsep" style="left:795px;top:300px;width:15px"></div>
<svg class="a" style="left:793px;top:304px" width="18" height="18"><circle cx="9" cy="9" r="6.5" fill="none" stroke="#404040" stroke-width="1.2"/><path d="M9 6v6 M6 9h6" stroke="#101010" stroke-width="1.8"/></svg>
<svg class="a" style="left:793px;top:322px" width="18" height="18"><path d="M2 7h14 M2 4v6 M16 4v6" stroke="#101010" stroke-width="1.6"/><circle cx="9" cy="12" r="3.5" fill="#3aa030"/><path d="M7 12 L8.5 13.5 L11 10.5" stroke="#fff" stroke-width="1.2" fill="none"/></svg>
<div class="hsep" style="left:795px;top:342px;width:15px"></div>
<svg class="a" style="left:793px;top:345px" width="18" height="18"><text x="9" y="11" text-anchor="middle" font-family="Liberation Sans" font-weight="bold" font-size="11" fill="#1a4a9a">A</text><path d="M2 14h14 M2 11v6 M16 11v6" stroke="#101010" stroke-width="1.6"/></svg>
<svg class="a" style="left:793px;top:363px" width="18" height="18"><path d="M6 12 L13 3" stroke="#d0b030" stroke-width="2.4"/><path d="M2 14h14 M2 11v6 M16 11v6" stroke="#101010" stroke-width="1.6"/></svg>
<svg class="a" style="left:793px;top:382px" width="18" height="18"><path d="M2 4h14 M3 2v5 M15 2v5" stroke="#2a5a9a" stroke-width="1.6"/><path d="M2 10h14 M3 7v9 M15 7v9" stroke="#101010" stroke-width="1.6"/></svg>
<svg class="a" style="left:793px;top:399px" width="18" height="18"><path d="M2 4 L16 8 L16 13 L2 13Z" fill="#2a5a9a"/><path d="M2 13h14v3h-14z" fill="#c8a030"/><path d="M4 13v2 M7 13v2 M10 13v2 M13 13v2" stroke="#604010" stroke-width="0.8"/></svg>
<div class="hsep" style="left:795px;top:418px;width:15px"></div>
<svg class="a" style="left:793px;top:423px" width="18" height="18"><path d="M2 13h14 M2 10v6 M16 10v6" stroke="#101010" stroke-width="1.8"/><path d="M6 12 L14 3" stroke="#202020" stroke-width="1.6"/><path d="M12 5 L15 2" stroke="#d09050" stroke-width="2"/></svg>
<div class="tb" style="left:814px;top:82px;width:21px;height:108px;background:#d4d0c8"></div>
<div class="a" style="left:818px;top:84px;width:14px;height:2px;border-top:1px solid #fff;border-bottom:1px solid #808080"></div>
<div class="a" style="left:818px;top:88px;width:14px;height:2px;border-top:1px solid #fff;border-bottom:1px solid #808080"></div>
<svg class="a" style="left:815px;top:91px" width="18" height="18"><path d="M3 7h12" stroke="#2a5a9a" stroke-width="1" stroke-dasharray="1.5 1.5"/><rect x="2" y="5.5" width="3" height="3" fill="#2a5a9a"/><rect x="13" y="5.5" width="3" height="3" fill="#2a5a9a"/><path d="M2 10h14v3h-14z" fill="#c8a030"/><path d="M4 10v2 M7 10v2 M10 10v2 M13 10v2" stroke="#604010" stroke-width="0.8"/></svg>
<svg class="a" style="left:815px;top:109px" width="18" height="18"><path d="M2 3 L15 7 L15 12 L2 12Z" fill="#2a5a9a"/><path d="M2 12h14v3h-14z" fill="#c8a030"/><path d="M4 12v2 M7 12v2 M10 12v2 M13 12v2" stroke="#604010" stroke-width="0.8"/></svg>
<svg class="a" style="left:815px;top:127px" width="18" height="18"><path d="M2 5 L12 2 L15 6 L15 12 L2 12Z" fill="#2a5a9a"/><path d="M5 5 L15 7" stroke="#a8d0f0" stroke-width="1"/><path d="M2 12h14v3h-14z" fill="#c8a030"/><path d="M4 12v2 M7 12v2 M10 12v2 M13 12v2" stroke="#604010" stroke-width="0.8"/></svg>
<div class="hsep" style="left:817px;top:147px;width:15px"></div>
<svg class="a" style="left:815px;top:150px" width="18" height="18"><path d="M4 3h9 M4 6h10 M4 9h9 M4 12h10 M5 3v12" stroke="#4a7ab8" stroke-width="1.6"/><path d="M8 3 C12 5 12 10 8 14" fill="none" stroke="#b0c8e8" stroke-width="2"/></svg>
<svg class="a" style="left:815px;top:168px" width="18" height="18"><path d="M3 3v13h13" stroke="#2a5a9a" stroke-width="1.6" fill="none"/><circle cx="10" cy="7" r="4" fill="#c0d0e8" stroke="#305080" stroke-width="1.2"/><circle cx="10" cy="7" r="1.4" fill="#2a5a9a"/><path d="M13 10 L16 13" stroke="#a06030" stroke-width="1.6"/></svg>
<div class="tb" style="left:814px;top:190px;width:21px;height:174px;background:#d4d0c8"></div>
<div class="a" style="left:818px;top:192px;width:14px;height:2px;border-top:1px solid #fff;border-bottom:1px solid #808080"></div>
<div class="a" style="left:818px;top:196px;width:14px;height:2px;border-top:1px solid #fff;border-bottom:1px solid #808080"></div>
<svg class="a" style="left:815px;top:201px" width="18" height="18"><rect x="2" y="2" width="6" height="14" fill="#fff" stroke="#101010" stroke-width="1.4"/><path d="M2 9h6" stroke="#404040" stroke-width="2.5"/><path d="M8 3 L15 9 L8 9 M8 10 L15 16 L8 16" fill="#fff" stroke="#c03040" stroke-width="1.2"/></svg>
<svg class="a" style="left:815px;top:219px" width="18" height="18"><path d="M2 8 L6 4 L10 8 L6 12Z" fill="#fff" stroke="#101010" stroke-width="1.2"/><circle cx="6" cy="8" r="1" fill="#c03040"/><path d="M10 3 L14 8" stroke="#1a3a8a" stroke-width="1.2"/><rect x="10" y="10" width="6" height="6" fill="#fff" stroke="#101010" stroke-width="1.4"/><path d="M3 3h1 M5 2h1" stroke="#c03040"/></svg>
<div class="hsep" style="left:817px;top:239px;width:15px"></div>
<svg class="a" style="left:815px;top:242px" width="18" height="18"><rect x="3" y="3" width="12" height="12" fill="#e03030"/><path d="M3 9 C7 6 11 12 15 8 L15 15 L3 15Z" fill="#2040c0"/><path d="M3 13 C7 11 11 15 15 13 L15 15 L3 15Z" fill="#308030"/><path d="M1 3h16 M1 15h16 M3 1v16 M15 1v16" stroke="#101010" stroke-width="1"/></svg>
<svg class="a" style="left:815px;top:260px" width="18" height="18"><rect x="2" y="2" width="14" height="14" fill="#e03030" stroke="#101010" stroke-width="1"/><path d="M2 8 L9 6 L9 12 L2 12Z" fill="#2040c0"/><path d="M9 8 L16 8 L16 12 L9 12Z" fill="#2040c0"/><path d="M2 12h14v4h-14z" fill="#309030"/><path d="M13 2 L5 16" stroke="#fff" stroke-width="2"/></svg>
<svg class="a" style="left:815px;top:278px" width="18" height="18"><circle cx="8" cy="7" r="5.5" fill="#10a090"/><circle cx="7" cy="6" r="2.5" fill="#30e0c0"/><circle cx="12" cy="12" r="3.5" fill="#fff" stroke="#404040" stroke-width="1"/><path d="M9.5 14.5 L6 17" stroke="#101010" stroke-width="2"/></svg>
<svg class="a" style="left:815px;top:296px" width="18" height="18"><path d="M2 10h5 L9 6 L11 13 L13 10 L16 10" fill="none" stroke="#101010" stroke-width="1.6"/></svg>
<div class="hsep" style="left:817px;top:316px;width:15px"></div>
<svg class="a" style="left:815px;top:318px" width="18" height="18"><path d="M8 2 L14 2 L10 8 L14 8 L7 16 L9 10 L6 10Z" fill="#e8e020" stroke="#808020" stroke-width="0.6"/><path d="M2 2v2 M2 6v2 M2 10v2" stroke="#606060" stroke-width="1.2"/><path d="M2 14 L4 11 L6 14Z" fill="#101010"/><path d="M10 15h1 M13 15h1" stroke="#101010" stroke-width="1.2"/></svg>
<div class="hsep" style="left:817px;top:338px;width:15px"></div>
<svg class="a" style="left:815px;top:342px" width="18" height="18"><circle cx="5" cy="5" r="3" fill="#fff" stroke="#101010" stroke-width="1.4"/><circle cx="12" cy="12" r="3.5" fill="#fff" stroke="#101010" stroke-width="1.4"/><path d="M11 2 L15 6 M13 6h2v-2" stroke="#101010" stroke-width="1.2" fill="none"/><path d="M2 10v5 M2 10 L5 13 L8 10 L8 15" stroke="#404040" stroke-width="1.1" fill="none"/></svg>
<div class="tb" style="left:814px;top:364px;width:21px;height:88px;background:#d4d0c8"></div>
<div class="a" style="left:818px;top:366px;width:14px;height:2px;border-top:1px solid #fff;border-bottom:1px solid #808080"></div>
<div class="a" style="left:818px;top:370px;width:14px;height:2px;border-top:1px solid #fff;border-bottom:1px solid #808080"></div>
<svg class="a" style="left:815px;top:374px" width="18" height="18"><text x="9" y="8" text-anchor="middle" font-family="Liberation Mono" font-weight="bold" font-size="7" fill="#101010" letter-spacing="1">ABC</text><path d="M2 12h14" stroke="#c0a0a0" stroke-width="1" stroke-dasharray="1.5 1"/><circle cx="2.5" cy="12" r="1.5" fill="#101010"/><circle cx="15.5" cy="12" r="1.5" fill="#101010"/></svg>
<svg class="a" style="left:815px;top:393px" width="18" height="18"><path d="M2 2 L16 16 M16 2 L2 16" stroke="#404040" stroke-width="1"/><rect x="4" y="6" width="10" height="6" fill="#fff"/><text x="9" y="11" text-anchor="middle" font-family="Liberation Mono" font-weight="bold" font-size="6" fill="#101010">ABC</text></svg>
<svg class="a" style="left:815px;top:411px" width="18" height="18"><path d="M5 10 L12 3" stroke="#c01020" stroke-width="3"/><path d="M12 1l1 2 M15 2l-1 2" stroke="#c03040" stroke-width="1"/><text x="9" y="16" text-anchor="middle" font-family="Liberation Mono" font-weight="bold" font-size="6" fill="#101010">ABCD</text></svg>
<svg class="a" style="left:815px;top:429px" width="18" height="18"><text x="9" y="8" text-anchor="middle" font-family="Liberation Mono" font-weight="bold" font-size="7" fill="#101010" letter-spacing="1">ABC</text><path d="M2 15 C5 10 13 10 16 15" fill="none" stroke="#404040" stroke-width="1.3"/></svg>
<!-- /RIGHT -->

<!-- BOTTOM -->
<div class="a" style="left:48px;top:82px;width:1px;height:446px;background:#808080"></div>
<div class="a" style="left:791px;top:82px;width:1px;height:446px;background:#fff"></div>
<div class="a" style="left:49px;top:515px;width:742px;height:13px;background:#d4d0c8"></div>
<div class="a" style="left:49px;top:515px;width:742px;height:1px;background:#787878"></div>
<div class="a" style="left:49px;top:516px;width:742px;height:1px;background:#ecebe6"></div>
<div class="btn" style="left:48px;top:516px;width:13px;height:12px"></div>
<div class="btn" style="left:61px;top:516px;width:12px;height:12px"></div>
<div class="btn" style="left:73px;top:516px;width:12px;height:12px"></div>
<div class="btn" style="left:85px;top:516px;width:13px;height:12px"></div>
<svg class="a" style="left:48px;top:516px" width="50" height="12">
<path d="M4 3v6 M8 3 L5 6 L8 9Z" stroke="#909090" fill="#909090"/>
<path d="M21 3 L17 6 L21 9Z" fill="#909090"/>
<path d="M30 3 L34 6 L30 9Z" fill="#909090"/>
<path d="M42 3 L45 6 L42 9Z M46 3v6" stroke="#909090" fill="#909090"/>
</svg>
<svg class="a" style="left:96px;top:515px" width="150" height="14">
<path d="M3 0 L53 0 L48 12 L7 12 Z" fill="#000"/>
<path d="M53 1 L149 1" stroke="#404040"/>
<path d="M53 0.5 L48.5 12.5 L93 12.5 L98 0.5" fill="#d8d4cc" stroke="#404040" stroke-width="1"/>
<path d="M98 0.5 L93.5 12.5 L139 12.5 L144 0.5" fill="#d8d4cc" stroke="#404040" stroke-width="1"/>
<path d="M54 2 L50 12" stroke="#fff" stroke-width="1"/>
<path d="M99 2 L95 12" stroke="#fff" stroke-width="1"/>
</svg>
<div class="t" style="left:109px;top:517px;color:#e01010;font-size:8.6px;line-height:10px">Модель</div>
<div class="t" style="left:155px;top:517px;font-size:8.6px;line-height:10px">Layout1</div>
<div class="t" style="left:200px;top:517px;font-size:8.6px;line-height:10px">Layout2</div>
<div class="a" style="left:5px;top:529px;width:830px;height:1px;background:#fff"></div>
<div class="a" style="left:5px;top:533px;width:830px;height:1px;background:#303030"></div>

<!-- command area -->
<div class="a" style="left:9px;top:541px;width:4px;height:38px;border-left:1px solid #fff;border-right:1px solid #808080"></div>
<div class="a" style="left:13px;top:541px;width:4px;height:38px;border-left:1px solid #fff;border-right:1px solid #808080"></div>
<div class="a" style="left:18px;top:542px;width:810px;height:39px;background:#c8e2da;border-top:2px solid #404040;border-left:2px solid #404040;border-right:1px solid #fff;border-bottom:1px solid #fff"></div>
<div class="a" style="left:20px;top:568px;width:796px;height:1px;background:#607070"></div>
<div class="a" style="left:765px;top:569px;width:62px;height:11px;background:#d4d0c8"></div>
<div class="t" style="left:19.5px;top:544.6px;font-family:'Liberation Mono',monospace;font-size:11.08px;line-height:11px;letter-spacing:0px;color:#202020">Следующая точка или [Отменить]:</div>
<div class="t" style="left:19.5px;top:555.1px;font-family:'Liberation Mono',monospace;font-size:11.08px;line-height:11px;letter-spacing:0px;color:#202020">Следующая точка или [Отменить]:</div>
<div class="t" style="left:19.5px;top:571.5px;font-family:'Liberation Mono',monospace;font-size:11.08px;line-height:11px;letter-spacing:0px;color:#202020">Команда:</div>
<div class="btn" style="left:815px;top:544px;width:12px;height:12px"></div>
<div class="a" style="left:818px;top:548px;border-left:3px solid transparent;border-right:3px solid transparent;border-bottom:3px solid #000"></div>
<div class="btn" style="left:815px;top:556px;width:12px;height:12px"></div>
<div class="a" style="left:818px;top:561px;border-left:3px solid transparent;border-right:3px solid transparent;border-top:3px solid #000"></div>
<div class="btn" style="left:765px;top:569px;width:12px;height:11px"></div>
<div class="a" style="left:769px;top:572px;border-top:3px solid transparent;border-bottom:3px solid transparent;border-right:3px solid #000"></div>
<div class="btn" style="left:777px;top:569px;width:12px;height:11px"></div>
<div class="a" style="left:789px;top:569px;width:13px;height:11px;background:#f0eeea"></div>
<div class="btn" style="left:802px;top:569px;width:12px;height:11px"></div>
<div class="a" style="left:807px;top:572px;border-top:3px solid transparent;border-bottom:3px solid transparent;border-left:3px solid #000"></div>

<!-- status bar -->
<div class="a" style="left:5px;top:584px;width:831px;height:1px;background:#fff"></div>
<div class="sb" style="left:9px;top:587px;width:124px;color:#8a8a8a;text-align:left;padding-left:2px;border-color:#808080 #fff #fff #808080">118.0032, 185.4396, 0.0000</div>
<div class="sbr" style="left:138px;top:587px;width:21px">ШАГ</div>
<div class="sbr" style="left:162px;top:587px;width:33px">СЕТКА</div>
<div class="sbr" style="left:198px;top:587px;width:27px">ОРТО</div>
<div class="sb" style="left:228px;top:587px;width:57px">ОТС-ПОЛЯР</div>
<div class="sb" style="left:287px;top:587px;width:55px">ПРИВЯЗКА</div>
<div class="sb" style="left:343px;top:587px;width:61px">ОТС-ОБЪЕКТ</div>
<div class="sb" style="left:406px;top:587px;width:30px">ДПСК</div>
<div class="sb" style="left:438px;top:587px;width:24px">ДИН</div>
<div class="sbr" style="left:465px;top:587px;width:22px">ВЕС</div>
<div class="sb" style="left:488px;top:587px;width:44px">МОДЕЛЬ</div>
<div class="t" style="left:591px;top:590px">Масштаб аннотаций:</div>
<div class="t" style="left:684px;top:590px">1:1</div>
<div class="a" style="left:697px;top:594px;border-left:3px solid transparent;border-right:3px solid transparent;border-top:3px solid #000"></div>
<svg class="a" style="left:714px;top:586px" width="16" height="16"><path d="M2 14 L6 6 L10 14Z" fill="none" stroke="#2a5aa8" stroke-width="1.4"/><circle cx="11" cy="5" r="3" fill="#f0e060"/><path d="M3 14h9" stroke="#2a5aa8" stroke-width="1.4"/></svg>
<svg class="a" style="left:735px;top:586px" width="16" height="16"><path d="M2 14 L6 6 L10 14Z" fill="none" stroke="#b0b0b0" stroke-width="1.4"/><path d="M7 12 L13 4" stroke="#b0b0b0" stroke-width="2"/></svg>
<div class="sb" style="left:756px;top:586px;width:35px;height:17px;background:#dcd8d0"></div>
<svg class="a" style="left:757px;top:587px" width="34" height="15"><path d="M7 8 L7 4 C7 1 13 1 13 4 L13 6" fill="none" stroke="#806010" stroke-width="1.6"/><rect x="2" y="7" width="9" height="7" fill="#c8a818" stroke="#605010"/><rect x="20" y="2" width="9" height="12" fill="#2a4a8a"/><path d="M23 4v9" stroke="#fff" stroke-width="1.4"/><circle cx="28" cy="11" r="3.5" fill="#30a040"/><path d="M26 11 L27.5 12.5 L30 9.5" stroke="#fff" stroke-width="1.2" fill="none"/></svg>
<div class="a" style="left:796px;top:594px;border-left:3px solid transparent;border-right:3px solid transparent;border-top:3px solid #000"></div>
<svg class="a" style="left:807px;top:586px" width="14" height="15"><rect x="1" y="1" width="12" height="12" fill="#b8d0f0" stroke="#2a5aa8" stroke-width="1.6"/><rect x="3.5" y="3.5" width="7" height="7" fill="#d8e8f8"/></svg>
<svg class="a" style="left:825px;top:590px" width="12" height="13"><path d="M11 2 L2 11 M11 6 L6 11 M11 10 L10 11" stroke="#808080" stroke-width="1.2"/><path d="M11 3 L3 11 M11 7 L7 11" stroke="#fff" stroke-width="0.8"/></svg>
<!-- /BOTTOM -->

<!-- CALLOUT -->
<svg class="a" style="left:0;top:0" width="840" height="605">
<defs>
<path id="cs" d="M30.5 22 L181 22 Q190 22 190 31 L190 148 L257 141.5 L190 169 L190 205 Q190 213.5 181.5 213.5 L29 213.5 Q20 213.5 20 204.5 L20 32 Q20 22 30.5 22 Z"/>
<clipPath id="cc"><use href="#cs"/></clipPath>
<filter id="bl" x="-20%" y="-20%" width="140%" height="140%"><feGaussianBlur stdDeviation="4.5"/></filter>
<filter id="sh2" x="-20%" y="-20%" width="140%" height="140%"><feGaussianBlur stdDeviation="2.2"/></filter>
<filter id="sh" x="-20%" y="-20%" width="140%" height="140%"><feGaussianBlur stdDeviation="3"/></filter>
</defs>
<use href="#cs" transform="translate(3,3)" fill="#000" opacity="0.75" filter="url(#sh2)"/>
<use href="#cs" fill="#fff"/>
<g clip-path="url(#cc)"><use href="#cs" fill="none" stroke="#8686de" stroke-width="14" filter="url(#bl)"/><path d="M180 151 L245 143.5 L180 166Z" fill="#fff" opacity="0.75" filter="url(#sh)"/></g>
<use href="#cs" fill="none" stroke="#1c1ca0" stroke-width="2.2" stroke-linejoin="round"/>
</svg>
<div class="a" style="left:19px;top:46px;width:170px;text-align:center;font-weight:bold;font-size:15.8px;line-height:18.05px;color:#080808;white-space:nowrap">убрала не нужные<br>нам теперь<br>элементы<br>предварительного<br>построения. Можно<br>приступать к<br>построению<br>клиньев годе</div>


</body></html>
